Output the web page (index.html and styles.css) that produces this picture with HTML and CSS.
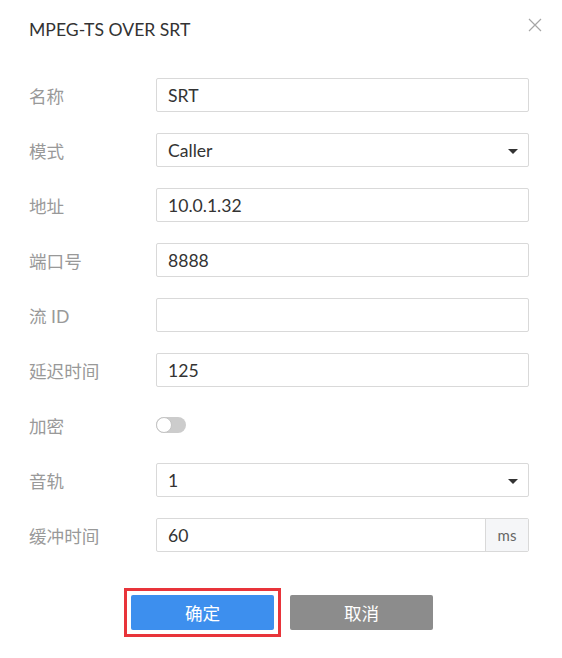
FILE: index.html
```html
<!DOCTYPE html>
<html lang="zh-CN">
<head>
    <meta charset="UTF-8">
    <meta name="viewport" content="width=device-width, initial-scale=1.0">
    <title>MPEG-TS OVER SRT</title>
    <link rel="stylesheet" href="styles.css">
</head>
<body>
    <div class="dialog">
        <div class="dialog-header">
            <h1>MPEG-TS OVER SRT</h1>
            <button class="close" aria-label="关闭">
                <svg width="14" height="14" viewBox="0 0 14 14"><path d="M1 1L13 13M13 1L1 13" stroke="#a6a6a6" stroke-width="1.2" fill="none"/></svg>
            </button>
        </div>
        <form class="form">
            <div class="row">
                <label>名称</label>
                <div class="field"><input type="text" value="SRT"></div>
            </div>
            <div class="row">
                <label>模式</label>
                <div class="field select"><span>Caller</span><i class="caret"></i></div>
            </div>
            <div class="row">
                <label>地址</label>
                <div class="field"><input type="text" value="10.0.1.32"></div>
            </div>
            <div class="row">
                <label>端口号</label>
                <div class="field"><input type="text" value="8888"></div>
            </div>
            <div class="row">
                <label>流 ID</label>
                <div class="field"><input type="text" value=""></div>
            </div>
            <div class="row">
                <label>延迟时间</label>
                <div class="field"><input type="text" value="125"></div>
            </div>
            <div class="row">
                <label>加密</label>
                <div class="switch"><span class="knob"></span></div>
            </div>
            <div class="row">
                <label>音轨</label>
                <div class="field select"><span>1</span><i class="caret"></i></div>
            </div>
            <div class="row">
                <label>缓冲时间</label>
                <div class="field group"><input type="text" value="60"><span class="addon">ms</span></div>
            </div>
            <div class="actions">
                <button type="button" class="btn btn-primary focused">确定</button>
                <button type="button" class="btn btn-default">取消</button>
            </div>
        </form>
    </div>
</body>
</html>
```

FILE: styles.css
```css
body {
    margin: 0;
    background: #fff;
    font-family: Lato, "Noto Sans CJK SC", sans-serif;
    color: #333;
}
.dialog {
    width: 562px;
    height: 658px;
    box-sizing: border-box;
    padding: 0 33px 0 29px;
}
.dialog-header {
    display: flex;
    justify-content: space-between;
    align-items: flex-start;
    padding-top: 19px;
    height: 78px;
    box-sizing: border-box;
}
.dialog-header h1 {
    margin: 0;
    font-size: 17.6px;
    font-weight: normal;
    line-height: 22px;
    color: #333;
}
.close {
    border: none;
    background: none;
    padding: 0;
    margin: -1px -13px 0 0;
    width: 14px;
    height: 14px;
    cursor: pointer;
}
.close svg {
    display: block;
}
.form {
    display: flex;
    flex-direction: column;
    gap: 21px;
}
.row {
    display: flex;
    align-items: center;
    height: 34px;
}
.row label {
    width: 127px;
    flex: none;
    font-size: 17.6px;
    color: #999;
}
.field {
    flex: 1;
    height: 34px;
    box-sizing: border-box;
    border: 1px solid #d9d9d9;
    border-radius: 2px;
    display: flex;
    align-items: center;
}
.field input {
    width: 100%;
    height: 100%;
    border: none;
    outline: none;
    background: transparent;
    padding: 0 11px;
    font: inherit;
    font-size: 17.6px;
    color: #333;
    box-sizing: border-box;
}
.select {
    justify-content: space-between;
    padding: 0 10px 0 11px;
    font-size: 17.6px;
}
.caret {
    width: 0;
    height: 0;
    border-left: 5px solid transparent;
    border-right: 5px solid transparent;
    border-top: 5px solid #333;
    margin-top: 2px;
}
.group input {
    flex: 1;
}
.addon {
    flex: none;
    width: 43px;
    height: 100%;
    box-sizing: border-box;
    border-left: 1px solid #d9d9d9;
    background: #f5f6f8;
    color: #666;
    font-size: 15px;
    display: flex;
    align-items: center;
    justify-content: center;
}
.switch {
    width: 30px;
    height: 16px;
    border-radius: 8px;
    background: #ccc;
    position: relative;
}
.knob {
    position: absolute;
    left: 0;
    top: 0;
    width: 16px;
    height: 16px;
    box-sizing: border-box;
    border-radius: 50%;
    background: #fff;
    border: 1px solid #c4c4c4;
}
.actions {
    display: flex;
    justify-content: center;
    gap: 16px;
    margin-top: 22px;
    padding-left: 6px;
}
.btn {
    width: 143px;
    height: 35px;
    border: none;
    border-radius: 2px;
    color: #fff;
    font-family: Lato, "Noto Sans CJK SC", sans-serif;
    font-size: 17.6px;
    cursor: pointer;
}
.focused {
    position: relative;
}
.focused::after {
    content: "";
    position: absolute;
    inset: -7px;
    border: 3px solid #e8343a;
}
.btn-primary {
    background: #3d8fee;
}
.btn-default {
    background: #8c8c8c;
}
```
